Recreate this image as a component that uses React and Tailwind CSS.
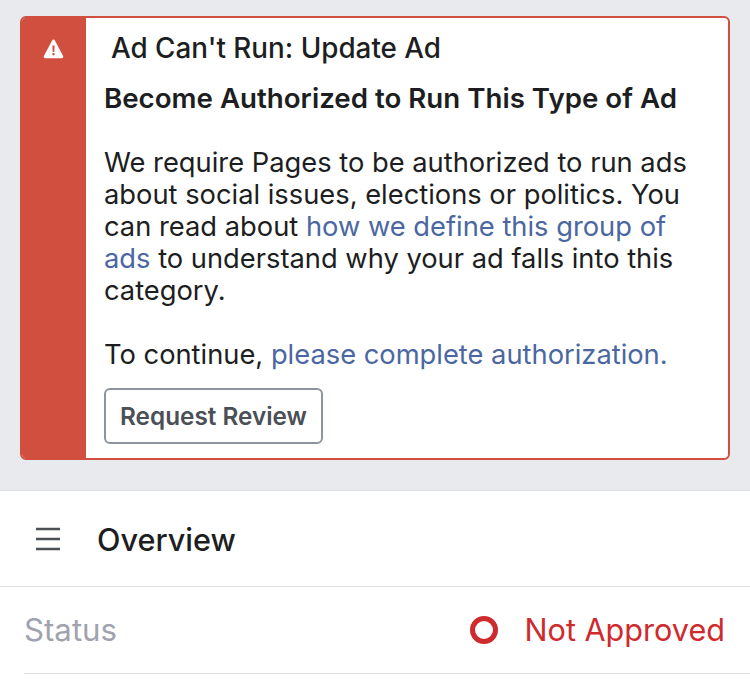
const App = () => {
  return (
    <div className="flex h-[683px] w-[750px] flex-col overflow-hidden bg-[#e9eaed] font-['Inter',sans-serif]">
      <div className="px-5 pt-4">
        <div className="flex h-[444px] overflow-hidden rounded-[6px] border-2 border-[#d14f3f] bg-white">
          <div className="flex w-[64px] shrink-0 justify-center bg-[#d14f3f] pt-[21px] pr-[2px]">
            <svg width="21" height="20" viewBox="0 0 21 20">
              <path
                fillRule="evenodd"
                fill="#fff"
                d="M10.5 0.5c.6 0 1.1.3 1.4.9l8.2 15.6c.5 1 -.2 2.2 -1.4 2.2H2.3c-1.2 0 -1.9 -1.2 -1.4 -2.2L9.1 1.4c.3 -.6 .8 -.9 1.4 -.9zM9.4 6.5l.3 6.5h1.6l.3 -6.5zM10.5 14c-.7 0 -1.2 .5 -1.2 1.2s.5 1.2 1.2 1.2 1.2 -.5 1.2 -1.2 -.5 -1.2 -1.2 -1.2z"
              />
            </svg>
          </div>
          <div className="min-w-0 flex-1 pl-[18px] text-[#1c1e21]">
            <div className="pl-[7px] pt-[12px] text-[27.8px] leading-[36px] font-[550] whitespace-nowrap">Ad Can't Run: Update Ad</div>
            <div className="pt-[14px] text-[27.7px] leading-[36px] font-semibold whitespace-nowrap">Become Authorized to Run This Type of Ad</div>
            <p className="mt-[31px] text-[27.3px] leading-[32px] whitespace-nowrap">
              We require Pages to be authorized to run ads
              <br />
              about social issues, elections or politics. You
              <br />
              can read about <span className="text-[#4b67a1]">how we define this group of</span>
              <br />
              <span className="text-[#4b67a1]">ads</span> to understand why your ad falls into this
              <br />
              category.
            </p>
            <p className="mt-[32px] text-[27.3px] leading-[32px] whitespace-nowrap">
              To continue, <span className="text-[#4b67a1]">please complete authorization.</span>
            </p>
            <button className="mt-[17px] h-[56px] w-[219px] rounded-[6px] border-2 border-[#8d949e] bg-white text-[24.3px] font-semibold text-[#4b4f56]">
              Request Review
            </button>
          </div>
        </div>
      </div>
      <div className="mt-[30px] flex-1 border-t border-[#dddfe2] bg-white">
        <div className="flex h-[96px] items-center border-b border-[#dddfe2] pl-[36px]">
          <svg width="24" height="24" viewBox="0 0 24 24" className="shrink-0">
            <path d="M0 2h24M0 12h24M0 22h24" stroke="#4b4f56" strokeWidth="2.4" />
          </svg>
          <span className="ml-[37px] pt-[2px] text-[30.6px] font-[450] text-[#1c1e21]">Overview</span>
        </div>
        <div className="ml-6 flex h-[87px] items-center justify-between border-b border-[#dddfe2] pr-[25px]">
          <span className="text-[31.2px] text-[#9ea3ad]">Status</span>
          <div className="flex items-center">
            <span className="h-[28px] w-[28px] rounded-full border-[5px] border-[#cf2a2e]" />
            <span className="ml-[26px] text-[30.6px] text-[#cf2a2e]">Not Approved</span>
          </div>
        </div>
      </div>
    </div>
  );
};

export default App;
